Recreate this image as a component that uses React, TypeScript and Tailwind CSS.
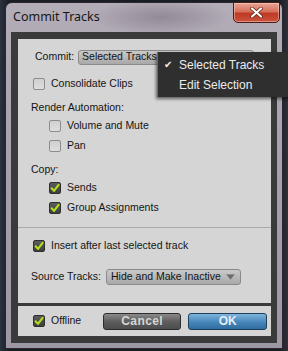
import React from 'react'

const ui = { fontFamily: '"Liberation Sans", Arial, sans-serif' }

function Box({ on }: { on?: boolean }) {
  if (on) {
    return (
      <span className="flex h-[12px] w-[12px] shrink-0 items-center justify-center rounded-[2px] border border-[#2e2e2e] bg-[linear-gradient(#5c5c5c,#3f3f3f)]">
        <svg width="10" height="10" viewBox="0 0 10 10">
          <path d="M1.6 5.3 L4 7.9 L8.6 1.9" fill="none" stroke="#b2df1c" strokeWidth="2.1" strokeLinecap="round" strokeLinejoin="round" />
        </svg>
      </span>
    )
  }
  return <span className="h-[12px] w-[12px] shrink-0 rounded-[2px] border border-[#8c8c8c] bg-[linear-gradient(#d0d0d0,#dedede)]" />
}

function Opt({ label, on, indent, className = '' }: { label: string; on?: boolean; indent?: boolean; className?: string }) {
  return (
    <div className={`flex h-[18px] items-center gap-[6px] ${indent ? 'pl-[31px]' : 'pl-[15px]'} ${className}`}>
      <Box on={on} />
      <span>{label}</span>
    </div>
  )
}

function Caret() {
  return (
    <svg width="9" height="6" viewBox="0 0 9 6">
      <path d="M0.5 0.5 L8.5 0.5 L4.5 5.5 Z" fill="#6a6a6a" stroke="#8a8a8a" strokeWidth="0.6" />
    </svg>
  )
}

export default function App() {
  return (
    <div
      className="relative h-[351px] w-[288px] overflow-hidden bg-[linear-gradient(90deg,#2a3340_0%,#1b1d24_3%,#1b1d24_97%,#30303a_100%)] pt-[2px] pl-[5px]"
      style={ui}
    >
      <div className="relative flex h-[347px] w-[278px] flex-col rounded-t-[7px] border border-[#2a2830] bg-[linear-gradient(180deg,#b3adb8_0%,#a8a1ae_40%,#9d97a4_100%)] px-[5px] pb-[5px]">
        {/* title bar */}
        <div className="flex h-[29px] shrink-0 items-center bg-[radial-gradient(ellipse_70px_18px_at_150px_14px,rgba(120,110,125,0.55),transparent)] pl-[2px] text-[12.5px] text-[#161616]" style={{ fontFamily: '"Noto Sans", "Open Sans", sans-serif' }}>
          Commit Tracks
        </div>
        <div className="absolute top-[-1px] right-[2px] flex h-[21px] w-[47px] items-center justify-center rounded-b-[5px] border border-[#4a1d16] bg-[linear-gradient(180deg,#e9a596_0%,#d6705c_45%,#bf3a25_55%,#c9533c_100%)] shadow-[inset_0_0_0_1px_rgba(255,220,210,0.45)]">
          <svg width="13" height="11" viewBox="0 0 13 11">
            <path d="M2 1.5 L11 9.5 M11 1.5 L2 9.5" stroke="#5a1e15" strokeWidth="3.6" strokeLinecap="round" />
            <path d="M2 1.5 L11 9.5 M11 1.5 L2 9.5" stroke="#ffffff" strokeWidth="2.2" strokeLinecap="round" />
          </svg>
        </div>

        {/* dialog body */}
        <div className="flex flex-1 flex-col gap-[3px] bg-[#3a3a3a] pt-[7px] pr-[6px] pb-[7px] pl-[7px] text-[10.5px] text-[#141414]">
          <div className="flex h-[264px] flex-col bg-[#d5d5d5] pt-[8px]">
            <div className="flex h-[20px] items-center gap-[4px] pl-[17px]">
              <span>Commit:</span>
              <div className="flex h-[15px] w-[176px] items-center justify-between rounded-[3px] border border-[#8a8a8a] bg-[linear-gradient(#c9c9c9,#a9a9a9)] px-[3px]">
                <span>Selected Tracks</span>
                <Caret />
              </div>
            </div>
            <Opt label="Consolidate Clips" className="mt-[8px]" />
            <div className="mt-[6px] flex h-[18px] items-center pl-[13px]">Render Automation:</div>
            <Opt label="Volume and Mute" indent />
            <Opt label="Pan" indent className="mt-[2px]" />
            <div className="mt-[6px] flex h-[18px] items-center pl-[13px]">Copy:</div>
            <Opt label="Sends" on indent />
            <Opt label="Group Assignments" on indent className="mt-[2px]" />
            <div className="mt-[10px] h-[1px] bg-[#a9a9a9]" />
            <Opt label="Insert after last selected track" on className="mt-[9px]" />
            <div className="mt-[12px] flex h-[20px] items-center gap-[5px] pl-[13px]">
              <span>Source Tracks:</span>
              <div className="flex h-[16px] w-[135px] items-center justify-between rounded-[3px] border border-[#8a8a8a] bg-[linear-gradient(#c9c9c9,#a9a9a9)] pr-[5px] pl-[4px]">
                <span>Hide and Make Inactive</span>
                <Caret />
              </div>
            </div>
          </div>
          <div className="flex h-[30px] items-center bg-[#d5d5d5] pl-[15px]">
            <Box on />
            <span className="ml-[6px]">Offline</span>
            <div className="ml-[22px] flex h-[17px] w-[78px] items-center justify-center rounded-[3px] border border-[#2c2c2c] bg-[linear-gradient(#8a8a8a,#5e5e5e_50%,#4c4c4c)] text-[12px] font-semibold tracking-[0.4px] text-[#d6d6d6]">
              Cancel
            </div>
            <div className="ml-[7px] flex h-[17px] w-[79px] items-center justify-center rounded-[3px] border border-[#1e3f5c] bg-[linear-gradient(#7fb4dc,#4a89bd_50%,#2f6b9e)] text-[12px] font-semibold text-[#e6eef5]">
              OK
            </div>
          </div>
        </div>
      </div>

      {/* open popup menu */}
      <div className="absolute top-[52px] left-[157px] flex h-[45px] w-[140px] flex-col justify-center gap-[4px] border-l border-[#6a6a6a] bg-[#2f2f2f] text-[12px] leading-[16px] text-[#ececec] shadow-[-1px_2px_3px_rgba(0,0,0,0.55)]">
        <div className="flex h-[16px] items-center">
          <span className="w-[21px] pl-[6px] text-[10px] leading-[16px]">✔</span>
          <span>Selected Tracks</span>
        </div>
        <div className="flex h-[16px] items-center">
          <span className="w-[21px]" />
          <span>Edit Selection</span>
        </div>
      </div>
    </div>
  )
}
